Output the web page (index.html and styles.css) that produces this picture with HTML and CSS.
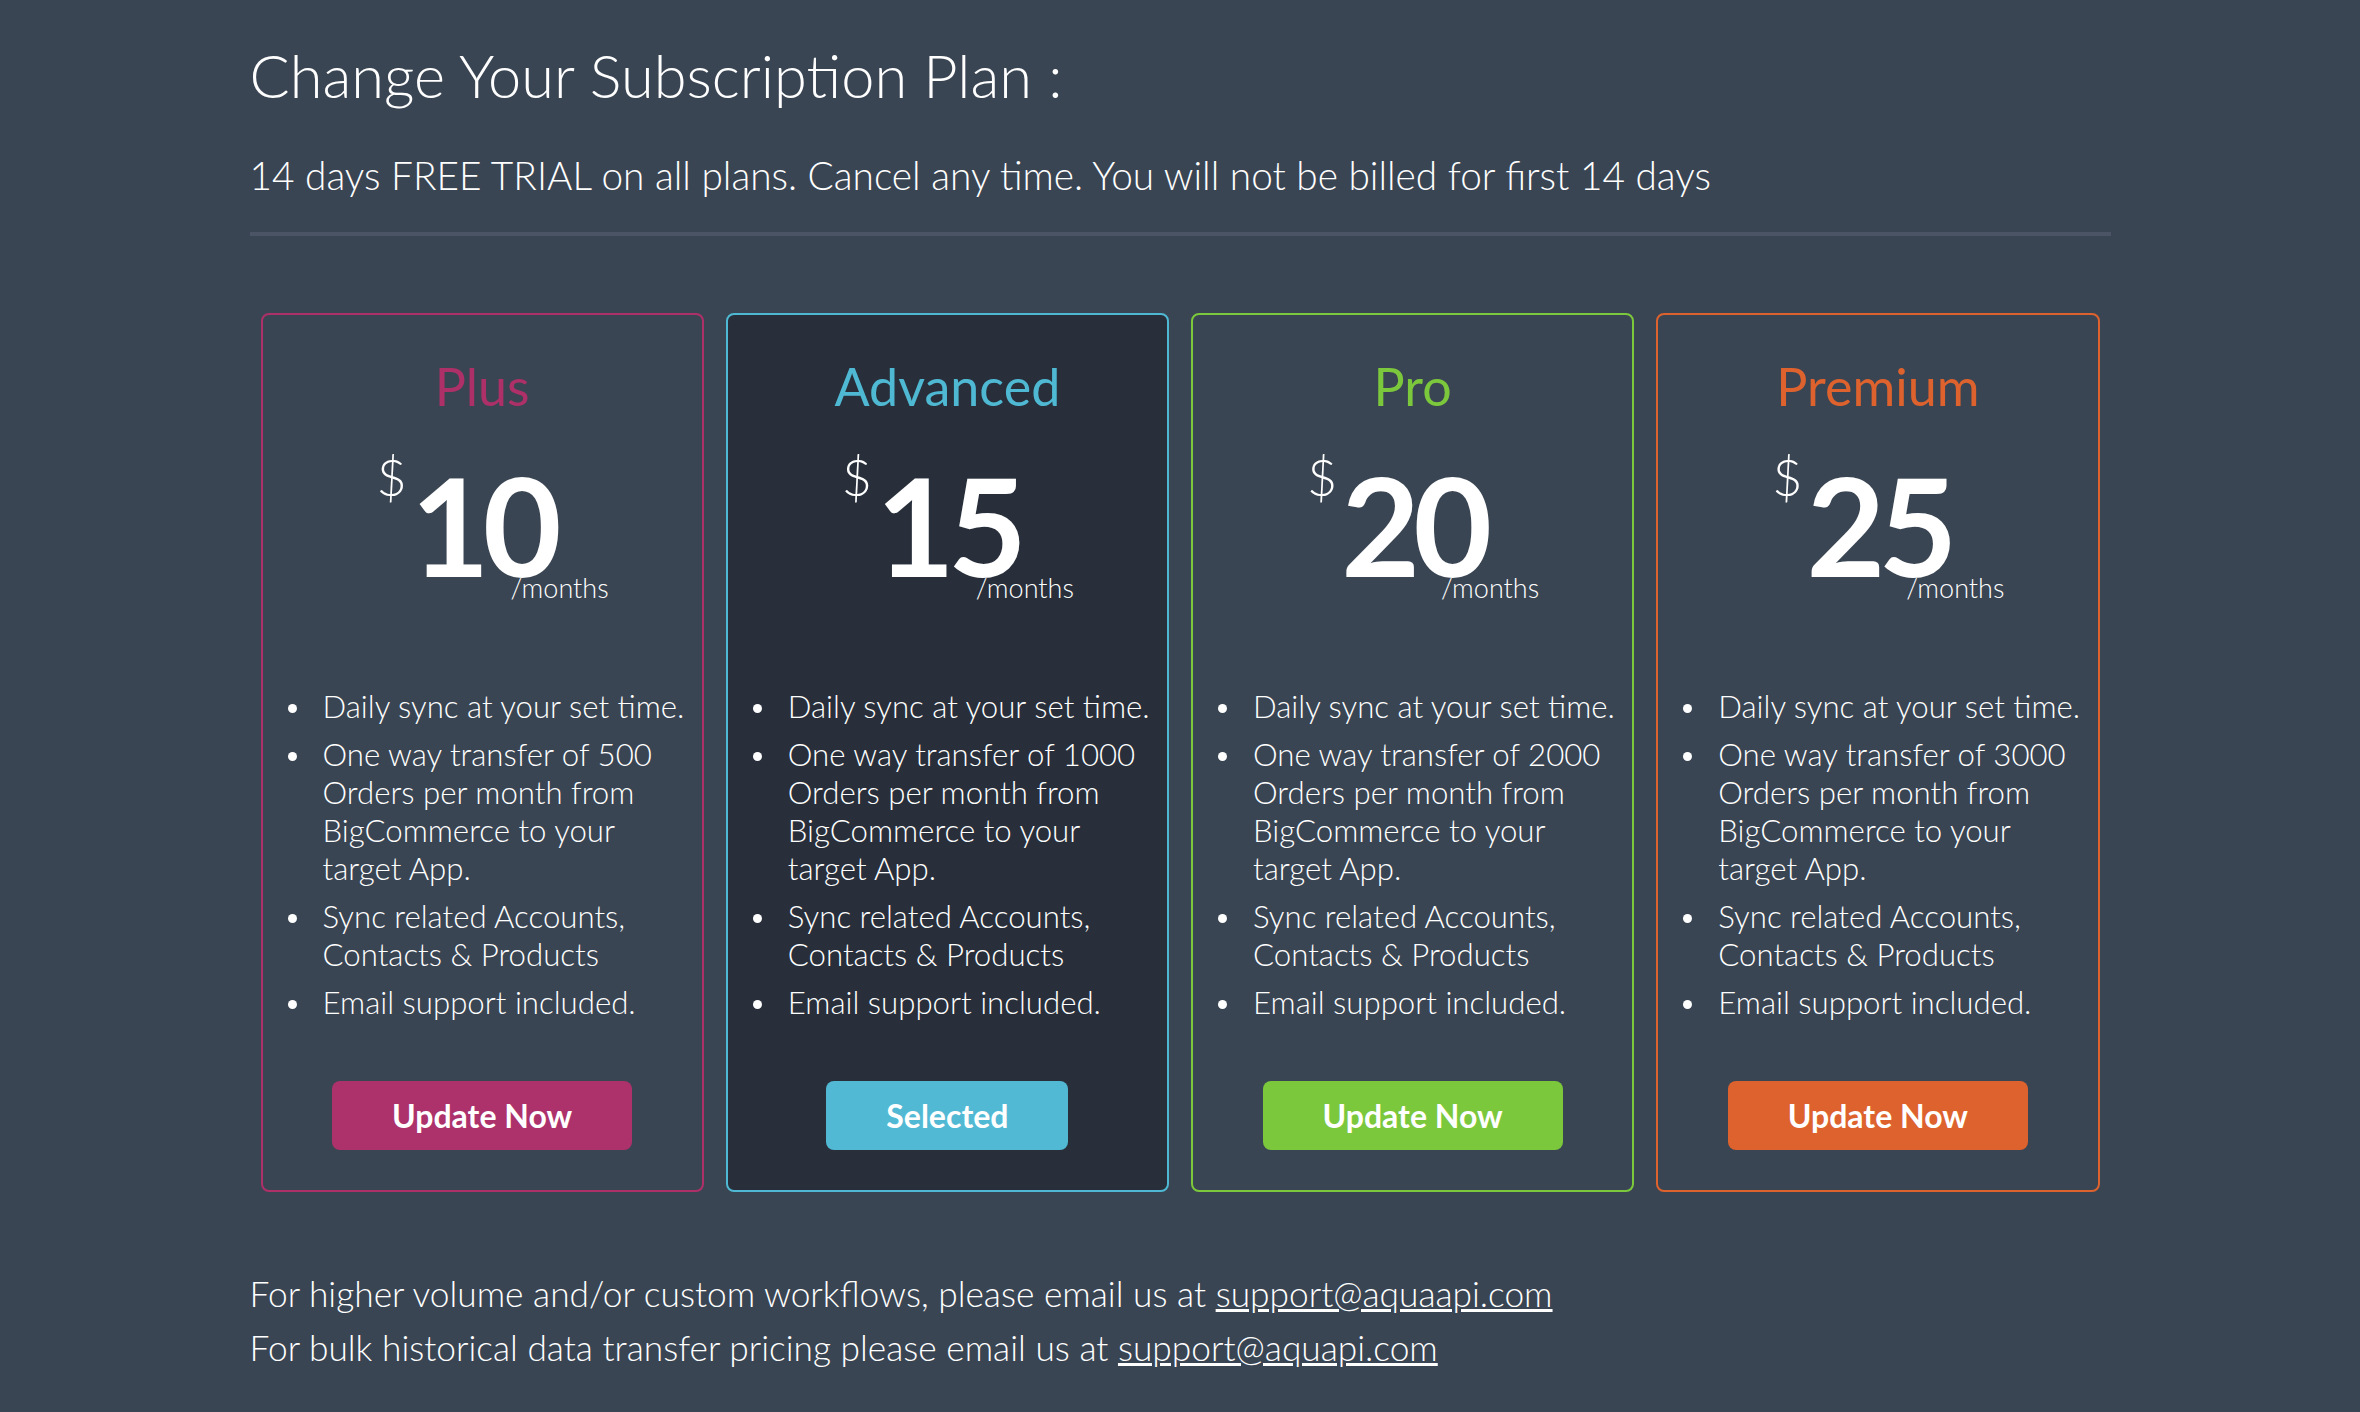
FILE: index.html
```html
<!DOCTYPE html>
<html lang="en">
<head>
<meta charset="UTF-8">
<meta name="viewport" content="width=device-width, initial-scale=1.0">
<title>Change Subscription Plan</title>
<link rel="stylesheet" href="styles.css">
</head>
<body>

<div class="page">
  <h1>Change Your Subscription Plan :</h1>
  <p class="trial">14 days FREE TRIAL on all plans. Cancel any time. You will not be billed for first 14 days</p>
  <hr class="divider">

  <div class="plans">
    <div class="plan-col">
      <div class="plan plan-plus">
        <h2 class="plan-name">Plus</h2>
        <div class="price"><span class="cur">$</span><span class="amount">10</span><span class="per">/months</span></div>
        <ul class="features">
          <li>Daily sync at your set time.</li>
          <li>One way transfer of 500 Orders per month from BigCommerce to your target App.</li>
          <li>Sync related Accounts, Contacts &amp; Products</li>
          <li>Email support included.</li>
        </ul>
        <div class="plan-action"><button class="btn">Update Now</button></div>
      </div>
    </div>
    <div class="plan-col">
      <div class="plan plan-advanced selected">
        <h2 class="plan-name">Advanced</h2>
        <div class="price"><span class="cur">$</span><span class="amount">15</span><span class="per">/months</span></div>
        <ul class="features">
          <li>Daily sync at your set time.</li>
          <li>One way transfer of 1000 Orders per month from BigCommerce to your target App.</li>
          <li>Sync related Accounts, Contacts &amp; Products</li>
          <li>Email support included.</li>
        </ul>
        <div class="plan-action"><button class="btn">Selected</button></div>
      </div>
    </div>
    <div class="plan-col">
      <div class="plan plan-pro">
        <h2 class="plan-name">Pro</h2>
        <div class="price"><span class="cur">$</span><span class="amount">20</span><span class="per">/months</span></div>
        <ul class="features">
          <li>Daily sync at your set time.</li>
          <li>One way transfer of 2000 Orders per month from BigCommerce to your target App.</li>
          <li>Sync related Accounts, Contacts &amp; Products</li>
          <li>Email support included.</li>
        </ul>
        <div class="plan-action"><button class="btn">Update Now</button></div>
      </div>
    </div>
    <div class="plan-col">
      <div class="plan plan-premium">
        <h2 class="plan-name">Premium</h2>
        <div class="price"><span class="cur">$</span><span class="amount">25</span><span class="per">/months</span></div>
        <ul class="features">
          <li>Daily sync at your set time.</li>
          <li>One way transfer of 3000 Orders per month from BigCommerce to your target App.</li>
          <li>Sync related Accounts, Contacts &amp; Products</li>
          <li>Email support included.</li>
        </ul>
        <div class="plan-action"><button class="btn">Update Now</button></div>
      </div>
    </div>
  </div>

  <div class="contact">
    <p>For higher volume and/or custom workflows, please email us at <a href="#">support@aquaapi.com</a></p>
    <p>For bulk historical data transfer pricing please email us at <a href="#">support@aquapi.com</a></p>
  </div>
</div>

</body>
</html>
```

FILE: styles.css
```css
body, html {
  margin: 0;
  background: #3a4553;
  color: #fff;
  font-family: Lato, "Open Sans", sans-serif;
}
.page {
  width: 1861px;
  margin: 0 auto;
}
h1 {
  margin: 42px 0 0;
  font-size: 59.5px;
  font-weight: 300;
  line-height: 66px;
}
.trial {
  margin: 44px 0 0;
  font-size: 38.8px;
  font-weight: 300;
  line-height: 47px;
}
.divider {
  margin: 33px 0 0;
  height: 4px;
  border: none;
  background: #4a5464;
}
.plans {
  display: grid;
  grid-template-columns: repeat(4, 1fr);
  margin-top: 77px;
}
.plan-col {
  padding: 0 11px;
}
.plan {
  height: 100%;
  box-sizing: border-box;
  padding: 40px 20px;
  border: 2px solid;
  border-radius: 8px;
  text-align: center;
}
.plan-name {
  margin: 0;
  font-size: 52px;
  font-weight: 400;
  line-height: 62px;
}
.price {
  margin-top: 40px;
  padding-left: 21px;
  font-size: 136px;
  line-height: 136px;
  height: 145px;
}
.cur {
  vertical-align: 81px;
  font-size: 52px;
  font-weight: 300;
  line-height: 20px;
  margin-right: 4px;
}
.amount {
  font-weight: 700;
  letter-spacing: -7px;
}
.per {
  vertical-align: -21px;
  font-size: 27px;
  font-weight: 300;
  line-height: 27px;
  margin-left: -44px;
}
.features {
  margin: 85px -14px 0 0;
  padding-left: 40px;
  text-align: left;
  font-size: 31.2px;
  font-weight: 300;
  line-height: 38px;
  list-style: none;
}
.features li {
  display: flex;
  margin-bottom: 10px;
}
.features li::before {
  content: "";
  flex: none;
  width: 9px;
  height: 9px;
  margin: 17px 26px 0 -35px;
  border-radius: 50%;
  background: #fff;
}
.features li:last-child {
  margin-bottom: 0;
}
.plan-action {
  margin-top: 60px;
}
.btn {
  padding: 15px 60px;
  border: none;
  border-radius: 8px;
  color: #fff;
  font-family: inherit;
  font-size: 32px;
  font-weight: 700;
  line-height: 39px;
  cursor: pointer;
}

.plan-plus { border-color: #ae3068; }
.plan-plus .plan-name { color: #ae3068; }
.plan-plus .btn { background: #ad316b; }

.plan-advanced { border-color: #4fb9d3; background: #282f3b; }
.plan-advanced .plan-name { color: #4fb9d3; }
.plan-advanced .btn { background: #52b9d4; }

.plan-pro { border-color: #7cc83c; }
.plan-pro .plan-name { color: #7cc83c; }
.plan-pro .btn { background: #7cc83c; }

.plan-premium { border-color: #dd622d; }
.plan-premium .plan-name { color: #dd622d; }
.plan-premium .btn { background: #dd622d; }

.contact {
  margin-top: 75px;
  font-size: 35.3px;
  font-weight: 300;
  line-height: 54px;
}
.contact p {
  margin: 0;
}
.contact a {
  color: #fff;
}
```
